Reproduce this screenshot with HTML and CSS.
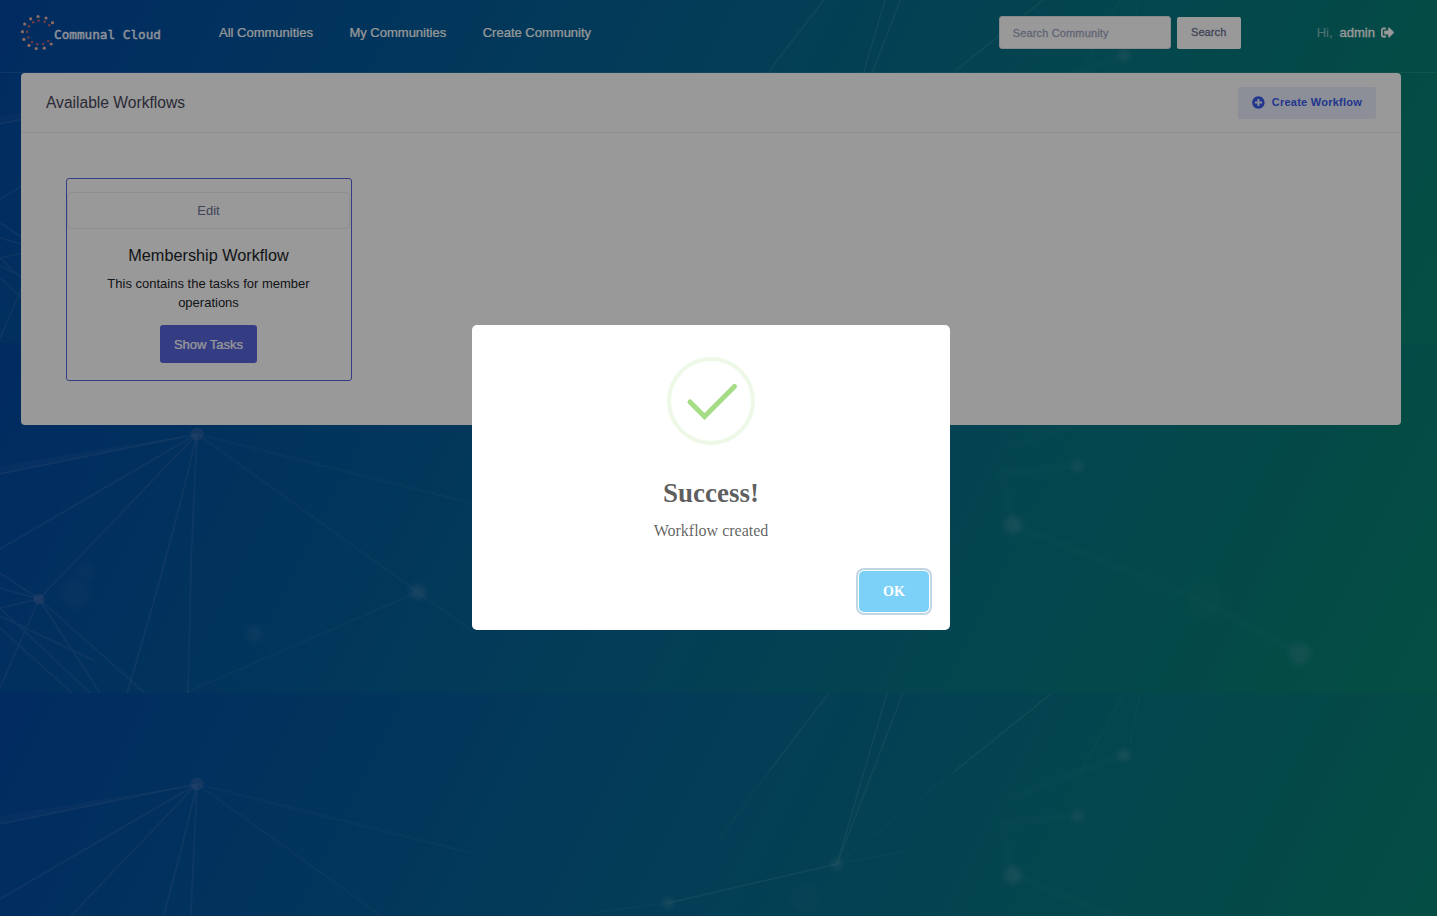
FILE: index.html
```html
<!DOCTYPE html>
<html lang="en">
<head>
<meta charset="utf-8">
<title>Communal Cloud</title>
<link rel="stylesheet" href="styles.css">
</head>
<body>
<svg class="backdrop" width="1437" height="916" aria-hidden="true">
  <defs>
    <linearGradient id="sea" gradientUnits="userSpaceOnUse" x1="0" y1="0" x2="1290" y2="645">
      <stop offset="0" stop-color="#0348a2"/>
      <stop offset=".1" stop-color="#034f9f"/>
      <stop offset=".3" stop-color="#045c98"/>
      <stop offset=".5" stop-color="#05688f"/>
      <stop offset=".7" stop-color="#077583"/>
      <stop offset=".85" stop-color="#077b78"/>
      <stop offset="1" stop-color="#078370"/>
    </linearGradient>
    <filter id="soft" x="-50%" y="-50%" width="200%" height="200%"><feGaussianBlur stdDeviation="2.5"/></filter>
    <pattern id="tile" patternUnits="userSpaceOnUse" x="0" y="-7" width="1437" height="350">
      <rect width="1437" height="350" fill="url(#sea)"/>
      <g stroke="#7d96c8" stroke-opacity=".16" stroke-width="1.6" fill="none">
        <path d="M197 91 0 131M197 91 0 206M197 91 39 256M197 91Q168 215 127 350M197 91 191 220 188 350"/>
        <path d="M39 256 0 230M39 256 0 245M39 256 0 265M39 256 0 345M39 256 100 350M39 256 145 350M0 265 90 350M0 285 72 350M0 273 95 318"/>
        <path d="M197 91 418 249 475 290M197 91 475 161M185 350 418 249" stroke-opacity=".09"/>
      </g>
      <path d="M197 91 0 123V131Z" fill="#7d96c8" fill-opacity=".07"/>
      <g stroke="#7fc0c4" stroke-opacity=".17" stroke-width="1.3" fill="none">
        <path d="M829 0 770 77M887 0 837 171M903 0 837 171 668 210M1052 0 955 78"/>
        <path d="M770 77 720 145M955 78 837 171 905 158M668 210 590 220M1140 0 1130 52M1124 0 1080 80" stroke-opacity=".06"/>
        <path d="M1124 62 1010 105M1013 182 1200 257 1300 311M1013 182 1002 130 1078 123" stroke-width="5" stroke-opacity=".05" filter="url(#soft)"/>
      </g>
      <g fill="#8fb0c8">
        <circle cx="197" cy="91" r="6.5" fill="#7080b8" fill-opacity=".26"/>
        <circle cx="39" cy="256" r="5.5" fill="#7080b8" fill-opacity=".3"/>
        <g filter="url(#soft)" fill-opacity=".2">
          <circle cx="254" cy="291" r="8" fill-opacity=".1"/>
          <circle cx="418" cy="249" r="8"/>
          <circle cx="76" cy="251" r="15" fill-opacity=".05"/>
          <circle cx="86" cy="229" r="9" fill-opacity=".05"/>
          <circle cx="837" cy="171" r="6"/>
          <circle cx="668" cy="210" r="6"/>
          <circle cx="804" cy="205" r="15" fill-opacity=".04"/>
          <circle cx="1124" cy="62" r="6.5"/>
          <circle cx="1078" cy="123" r="6.5" fill-opacity=".16"/>
          <circle cx="1013" cy="182" r="9"/>
          <circle cx="1300" cy="311" r="11" fill-opacity=".16"/>
          <circle cx="1205" cy="257" r="18" fill-opacity=".03"/>
        </g>
      </g>
    </pattern>
  </defs>
  <rect width="1437" height="916" fill="url(#tile)"/>
</svg>

<div class="page">
  <header class="header">
    <a class="brand">
      <svg class="brand-ring" width="36" height="36" viewBox="20 14 36 36" aria-hidden="true">
        <g fill="#e6b4a6">
          <circle cx="38" cy="16.5" r="1.6"/><circle cx="46" cy="18" r="1.6"/><circle cx="52.5" cy="22.7" r="1.6"/><circle cx="30.7" cy="18.8" r="1.6"/><circle cx="24.7" cy="24" r="1.6"/><circle cx="22.4" cy="31.7" r="1.6"/><circle cx="23.9" cy="39.4" r="1.6"/><circle cx="29" cy="45.4" r="1.6"/><circle cx="36.2" cy="48.5" r="1.6"/><circle cx="44.3" cy="48.2" r="1.6"/><circle cx="51.2" cy="44" r="1.6"/>
        </g>
        <g fill="#c4676b">
          <circle cx="38.6" cy="20.5" r="1.2"/><circle cx="44.7" cy="21.8" r="1.2"/><circle cx="49.3" cy="25.3" r="1.2"/><circle cx="33.2" cy="22.3" r="1.2"/><circle cx="29" cy="26.3" r="1.2"/><circle cx="27.1" cy="31.8" r="1.2"/><circle cx="28.4" cy="37.4" r="1.2"/><circle cx="32" cy="42" r="1.2"/><circle cx="37.1" cy="44.3" r="1.2"/><circle cx="43" cy="44.1" r="1.2"/><circle cx="48.2" cy="41.1" r="1.2"/>
        </g>
      </svg>
      <span class="brand-name">Communal Cloud</span>
    </a>
    <nav class="nav">
      <a>All Communities</a>
      <a>My Communities</a>
      <a>Create Community</a>
    </nav>
    <form class="search">
      <input class="search-input" type="text" placeholder="Search Community">
      <button class="search-btn" type="button">Search</button>
    </form>
    <div class="user">
      <span class="hi">Hi,</span>
      <span class="name">admin</span>
      <svg width="13" height="13" viewBox="0 0 512 512" aria-hidden="true"><path fill="#fff" stroke="#fff" stroke-width="14" d="M497 273 329 441c-15 15-41 4.500-41-17v-96H152c-13.300 0-24-10.700-24-24v-96c0-13.300 10.700-24 24-24h136V88c0-21.400 25.900-32 41-17l168 168c9.300 9.400 9.300 24.600 0 34zM192 436v-40c0-6.600-5.400-12-12-12H96c-17.700 0-32-14.300-32-32V160c0-17.700 14.300-32 32-32h84c6.600 0 12-5.400 12-12V76c0-6.600-5.400-12-12-12H96c-53 0-96 43-96 96v192c0 53 43 96 96 96h84c6.600 0 12-5.400 12-12z"/></svg>
    </div>
  </header>

  <main class="panel">
    <div class="panel-head">
      <h3>Available Workflows</h3>
      <button class="create" type="button">
        <svg width="13" height="13" viewBox="0 0 512 512" aria-hidden="true"><path fill="currentColor" d="M256 8C119 8 8 119 8 256s111 248 248 248 248-111 248-248S393 8 256 8zm144 276c0 6.600-5.400 12-12 12h-92v92c0 6.600-5.400 12-12 12h-56c-6.600 0-12-5.400-12-12v-92h-92c-6.600 0-12-5.400-12-12v-56c0-6.600 5.400-12 12-12h92v-92c0-6.600 5.400-12 12-12h56c6.600 0 12 5.400 12 12v92h92c6.600 0 12 5.400 12 12v56z"/></svg>
        <span>Create Workflow</span>
      </button>
    </div>
    <div class="panel-body">
      <article class="card">
        <button class="edit" type="button">Edit</button>
        <h5>Membership Workflow</h5>
        <p>This contains the tasks for member operations</p>
        <button class="tasks" type="button">Show Tasks</button>
      </article>
    </div>
  </main>
</div>

<div class="overlay">
  <div class="modal" role="dialog">
    <svg class="success" width="88" height="88" viewBox="0 0 88 88" aria-hidden="true">
      <circle cx="44" cy="44" r="42" fill="none" stroke="#a5dc86" stroke-opacity=".2" stroke-width="4"/>
      <path d="M23 45 37.500 59.500 67.500 29.500" fill="none" stroke="#a5dc86" stroke-width="5" stroke-linecap="round"/>
    </svg>
    <div class="modal-title">Success!</div>
    <div class="modal-text">Workflow created</div>
    <div class="modal-footer"><button class="ok" type="button">OK</button></div>
  </div>
</div>
</body>
</html>
```

FILE: styles.css
```css
* { box-sizing: border-box; }
html, body { height: 100%; }
body {
  margin: 0;
  overflow: hidden;
  font-family: "Liberation Sans", Arial, sans-serif;
  font-size: 13px;
  color: #212529;
}
button, input { font-family: inherit; margin: 0; }
h3, h5, p { margin: 0; font-weight: 400; }

.backdrop { position: absolute; top: 0; left: 0; z-index: -1; }

.header {
  display: flex;
  align-items: center;
  height: 73px;
  padding: 0 43px 7px 20px;
  border-bottom: 1px solid rgba(255, 255, 255, .1);
}
.brand { display: flex; align-items: center; width: 199px; margin-top: -1px; }
.brand-ring { flex: none; margin-right: -2px; }
.brand-name {
  padding-top: 4px;
  font: 12.700px "DejaVu Sans Mono", monospace;
  color: #eef3ff;
  -webkit-text-stroke: .4px #eef3ff;
  white-space: nowrap;
}
.nav { display: flex; gap: 36.500px; font-size: 13px; color: #fff; -webkit-text-stroke: .2px #fff; }
.search { display: flex; align-items: center; gap: 6px; margin-left: auto; }
.search-input {
  width: 172px;
  height: 33px;
  padding: 1px 13px 0;
  border: 1px solid #e2e5ec;
  border-radius: 3px;
  background: #fff;
  font-size: 11px;
  letter-spacing: .15px;
}
.search-input::placeholder { color: #a1a8c3; -webkit-text-stroke: .3px #a1a8c3; }
.search-btn {
  width: 64px;
  height: 32px;
  margin-top: 1px;
  padding: 0 0 2px;
  border: 0;
  border-radius: 2px;
  background: #fff;
  color: #6c7293;
  font-size: 11px;
  letter-spacing: .1px;
  -webkit-text-stroke: .3px #6c7293;
}
.user { display: flex; align-items: center; margin-left: 76px; color: #fff; }
.hi { margin-right: 7px; opacity: .5; }
.name { margin-right: 6px; -webkit-text-stroke: .3px #fff; }

.panel {
  width: 1380px;
  height: 352px;
  margin-left: 21px;
  border-radius: 4px;
  background: #fff;
}
.panel-head {
  display: flex;
  align-items: center;
  justify-content: space-between;
  height: 60px;
  padding: 0 25px;
  border-bottom: 1px solid #ebedf2;
}
.panel-head h3 { font-size: 15.600px; color: #48465b; }
.create {
  display: flex;
  align-items: center;
  gap: 7px;
  width: 138px;
  height: 32px;
  padding: 0 14px;
  border: 0;
  border-radius: 2px;
  background: #eaeefe;
  color: #385aeb;
  font-size: 11px;
  font-weight: bold;
  letter-spacing: .24px;
  white-space: nowrap;
}
.create span { padding-bottom: 1px; }
.panel-body { padding: 45px; }
.card {
  display: flex;
  flex-direction: column;
  align-items: center;
  width: 286px;
  height: 203px;
  padding: 13px 1px 0 0;
  border: 1px solid #5867dd;
  border-radius: 3px;
  text-align: center;
}
.edit {
  width: 283px;
  height: 37px;
  padding: 0;
  border: 1px solid #ebedf2;
  border-radius: 4px;
  background: none;
  font-size: 13px;
  color: #6c7293;
}
.card h5 { margin-top: 16px; font-size: 16.250px; line-height: 20px; }
.card p { width: 244px; margin-top: 9px; line-height: 19px; }
.tasks {
  width: 97px;
  height: 38px;
  margin-top: 13px;
  padding: 0;
  border: 0;
  border-radius: 3px;
  background: #5867dd;
  color: #fff;
  font-size: 13px;
  -webkit-text-stroke: .2px #fff;
}

.overlay {
  position: absolute;
  inset: 0;
  padding: 325px 0 0 472px;
  background: rgba(0, 0, 0, .4);
}
.modal {
  display: flex;
  flex-direction: column;
  align-items: center;
  width: 478px;
  height: 305px;
  padding: 32px 18px 0;
  border-radius: 5px;
  background: #fff;
  font-family: "Liberation Serif", "Times New Roman", serif;
}
.modal-title {
  margin-top: 33px;
  font-size: 27px;
  font-weight: bold;
  line-height: 31px;
  color: rgba(0, 0, 0, .65);
}
.modal-text { margin-top: 13px; font-size: 16px; line-height: 18px; color: rgba(0, 0, 0, .64); }
.modal-footer { align-self: stretch; display: flex; justify-content: flex-end; margin-top: 31px; padding-right: 3px; }
.ok {
  width: 70px;
  height: 41px;
  padding: 0;
  border: 0;
  border-radius: 5px;
  background: #7cd1f9;
  color: #fff;
  font-size: 14px;
  font-weight: bold;
  box-shadow: 0 0 0 1px #fff, 0 0 0 3px rgba(43, 114, 165, .29);
}
```
